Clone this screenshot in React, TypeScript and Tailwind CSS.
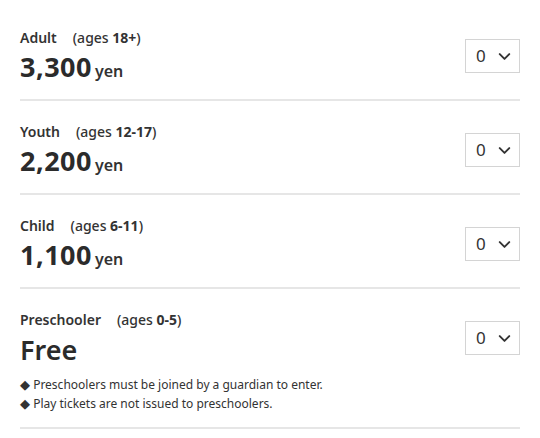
import {ChevronDown} from "lucide-react";

type Ticket = {
    name: string;
    ages: string;
    price: string | null;
    notes?: string[];
};

const tickets: Ticket[] = [
    {name: "Adult", ages: "18+", price: "3,300"},
    {name: "Youth", ages: "12-17", price: "2,200"},
    {name: "Child", ages: "6-11", price: "1,100"},
    {
        name: "Preschooler",
        ages: "0-5",
        price: null,
        notes: [
            "Preschoolers must be joined by a guardian to enter.",
            "Play tickets are not issued to preschoolers.",
        ],
    },
];

function QtySelect() {
    return (
        <div className="mt-3 flex items-center justify-between w-[55px] h-[34px] border border-[#d4d4d4] bg-white pl-[10px] pr-[5px]">
            <span className="text-[17px] text-[#333]">0</span>
            <ChevronDown size={19} strokeWidth={2.4} className="text-[#333]"/>
        </div>
    );
}

function TicketRow({ticket}: { ticket: Ticket }) {
    return (
        <li className="flex items-start justify-between border-b-2 border-[#e6e6e6] pt-5 pb-[14px]">
            <div className="flex flex-col">
                <p className="text-[14px] leading-[22px] font-semibold text-[#333]">
                    {ticket.name}
                    <span className="ml-4 font-medium">
                        (ages <span className="font-bold">{ticket.ages}</span>)
                    </span>
                </p>
                {ticket.price ? (
                    <p className="flex items-baseline h-9 leading-9">
                        <span className="text-[27px] font-bold text-[#2b2b2b] tracking-[0.5px]">{ticket.price}</span>
                        <span className="ml-[3px] text-[16px] font-semibold text-[#333]">yen</span>
                    </p>
                ) : (
                    <p className="h-9 leading-9 mt-[1px] text-[27px] font-semibold text-[#2b2b2b]">Free</p>
                )}
                {ticket.notes && (
                    <ul className="mt-[7px]">
                        {ticket.notes.map((n) => (
                            <li key={n} className="text-[12px] leading-[19px] text-[#333]">
                                <span className="text-[13px]">◆</span> {n}
                            </li>
                        ))}
                    </ul>
                )}
            </div>
            <QtySelect/>
        </li>
    );
}

export default function App() {
    return (
        <div className="w-[540px] h-[438px] bg-white px-5 pt-[7px] overflow-hidden"
             style={{fontFamily: '"Noto Sans", "Liberation Sans", sans-serif'}}>
            <ul>
                {tickets.map((t) => (
                    <TicketRow key={t.name} ticket={t}/>
                ))}
            </ul>
        </div>
    );
}
